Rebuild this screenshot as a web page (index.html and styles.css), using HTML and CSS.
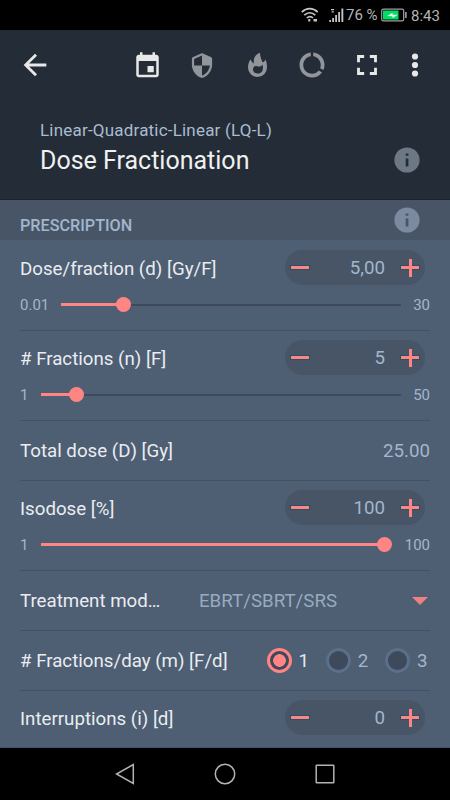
FILE: index.html
```html
<!DOCTYPE html>
<html lang="en">
<head>
<meta charset="utf-8">
<title>Dose Fractionation</title>
<link rel="stylesheet" href="styles.css">
</head>
<body>
<div class="status">
  <svg class="wifi" width="18" height="16" viewBox="0 0 18 16" fill="none" stroke="#c4c4c4" stroke-width="1.7"><path d="M.8 5.2C5.5.5 12 .5 16.700 5.200M3.300 8.200c3.300-3.200 7.700-3.200 11 0M5.800 11c2-1.900 4.400-1.900 6.200 0"/><path d="M7.300 13.200h2M12.500 13.200h3.500" stroke-width="2.400"/></svg>
  <svg class="signal" width="15" height="16" viewBox="0 0 15 16" fill="#c4c4c4"><path d="M.3 13h1.700v2H.300zM3.200 11H5v4H3.200zM6.200 8H8v7H6.200zM9.200 5H11v10H9.200zM12.400 1.500h1.900V15h-1.900zM2 2h3v1.300H2zM2.600 4.200h2.200v1.300H2.600z"/></svg>
  <span class="pct">76 %</span>
  <svg class="battery" width="26" height="14" viewBox="0 0 26 14"><rect x=".7" y="1.200" width="22" height="11.600" rx="1.600" fill="none" stroke="#a99eaa" stroke-width="1.200"/><rect x="2" y="2.500" width="15.500" height="9" fill="#00df64"/><path d="M6 8l5.500-3v1.800H17L11.500 10V8.300z" fill="#e9fff1"/><path d="M24.200 4h1.400v6h-1.400z" fill="#b5b5b5"/></svg>
  <span class="clock">8:43</span>
</div>
<header class="header">
  <div class="toolbar">
    <svg class="back" width="34" height="34" viewBox="0 0 24 24"><path d="M20 11H7.830l5.590-5.590L12 4l-8 8 8 8 1.410-1.410L7.830 13H20v-2z"/></svg>
    <div class="tool"><svg class="low" width="31" height="30" viewBox="0 0 24 24"><path d="M17 12h-5v5h5v-5zM16 1v2H8V1H6v2H5c-1.110 0-1.990.9-1.990 2L3 19c0 1.100.890 2 2 2h14c1.100 0 2-.9 2-2V5c0-1.100-.9-2-2-2h-1V1h-2zm3 18H5V8h14v11z"/></svg></div>
    <div class="tool dim"><svg width="28" height="27" viewBox="0 0 24 24"><path d="M11.190 1.360l-7 3.110C3.470 4.790 3 5.510 3 6.300V11c0 5.550 3.840 10.740 9 12 5.160-1.260 9-6.450 9-12V6.300c0-.79-.47-1.510-1.190-1.830l-7-3.110c-.51-.23-1.110-.23-1.620 0zM12 11.990h7c-.53 4.120-3.280 7.790-7 8.940V12H5V6.300l7-3.110v8.800z"/></svg></div>
    <div class="tool dim"><svg width="25" height="28" viewBox="0 0 25 28"><path fill-rule="evenodd" d="M15 1.800C10 3.500 8 8 9 12.500C7.300 11.500 6 10 5.600 8.200C4 10.500 3 13 3 16.500a9.500 9.500 0 0 0 19 0C22 13 21.500 11 20.700 8.500C20 10 19 11 17.500 11.200C16 8 15 5 15 1.800zM17.600 13.500C18.800 20 16.500 22.500 12.500 22.500C9.500 22.500 8 20.500 8 18.500C8 15.800 10 14.800 12 15.200C14 16 16.500 15.500 17.600 13.500z"/></svg></div>
    <div class="tool dim"><svg width="30" height="30" viewBox="0 0 24 24"><path d="M13 2.050v3.030c3.390.49 6 3.390 6 6.920 0 .9-.18 1.750-.48 2.540l2.600 1.530c.56-1.240.88-2.620.88-4.070 0-5.180-3.950-9.450-9-9.950zM12 19c-3.870 0-7-3.130-7-7 0-3.530 2.610-6.430 6-6.920V2.050c-5.060.5-9 4.760-9 9.950 0 5.520 4.470 10 9.990 10 3.310 0 6.240-1.610 8.060-4.090l-2.600-1.530C16.170 17.980 14.210 19 12 19z"/></svg></div>
    <div class="tool"><svg width="34" height="34" viewBox="0 0 24 24"><path d="M7 14H5v5h5v-2H7v-3zm-2-4h2V7h3V5H5v5zm12 7h-3v2h5v-5h-2v3zM14 5v2h3v3h2V5h-5z"/></svg></div>
    <div class="tool more"><svg width="8" height="26" viewBox="0 0 8 26"><circle cx="4" cy="4.500" r="3.100"/><circle cx="4" cy="13" r="3.100"/><circle cx="4" cy="21.500" r="3.100"/></svg></div>
  </div>
  <div class="heading">
    <div>
      <div class="subtitle">Linear-Quadratic-Linear (LQ-L)</div>
      <h1 class="title">Dose Fractionation</h1>
    </div>
    <svg class="info" width="26" height="26" viewBox="0 0 26 26"><circle cx="13" cy="13" r="12.600" fill="#6c7985"/><path d="M11.700 6.500h2.700v2.300h-2.700zM11.700 11.500h2.700v8h-2.700z" fill="#242c37"/></svg>
  </div>
</header>
<div class="section">
  <h2 class="section-name">PRESCRIPTION</h2>
  <svg class="info" width="26" height="26" viewBox="0 0 26 26"><circle cx="13" cy="13" r="12.600" fill="#7b8a9e"/><path d="M11.700 6.500h2.700v2.300h-2.700zM11.700 11.500h2.700v8h-2.700z" fill="#475567"/></svg>
</div>
<main class="list">
  <div class="row tall">
    <div class="line"><span class="label">Dose/fraction (d) [Gy/F]</span><div class="stepper"><i class="minus"></i><span class="num">5,00</span><i class="plus"></i></div></div>
    <div class="range"><span class="min wide">0.01</span><div class="track"><div class="fill" style="width:62px"></div><i class="knob"></i></div><span class="max">30</span></div>
  </div>
  <div class="row tall">
    <div class="line"><span class="label"># Fractions (n) [F]</span><div class="stepper"><i class="minus"></i><span class="num">5</span><i class="plus"></i></div></div>
    <div class="range"><span class="min">1</span><div class="track"><div class="fill" style="width:35.5px"></div><i class="knob"></i></div><span class="max">50</span></div>
  </div>
  <div class="row short"><span class="label">Total dose (D) [Gy]</span><span class="value">25.00</span></div>
  <div class="row tall">
    <div class="line"><span class="label">Isodose [%]</span><div class="stepper"><i class="minus"></i><span class="num">100</span><i class="plus"></i></div></div>
    <div class="range"><span class="min">1</span><div class="track"><div class="fill" style="width:344px"></div><i class="knob"></i></div><span class="max wide">100</span></div>
  </div>
  <div class="row short"><span class="label mod">Treatment mod…</span><span class="select">EBRT/SBRT/SRS</span><i class="caret"></i></div>
  <div class="row short">
    <span class="label day"># Fractions/day (m) [F/d]</span>
    <span class="option on"><i class="radio"></i>1</span>
    <span class="option"><i class="radio"></i>2</span>
    <span class="option"><i class="radio"></i>3</span>
  </div>
  <div class="row last">
    <div class="line"><span class="label">Interruptions (i) [d]</span><div class="stepper"><i class="minus"></i><span class="num">0</span><i class="plus"></i></div></div>
  </div>
</main>
<nav class="nav">
  <svg width="20" height="22" viewBox="0 0 20 22"><path d="M18.300 1.500v19L1.500 11z"/></svg>
  <svg width="22" height="22" viewBox="0 0 22 22"><circle cx="11" cy="11" r="9.700"/></svg>
  <svg width="20" height="20" viewBox="0 0 20 20"><rect x="1.200" y="1.200" width="17.600" height="17.600" rx=".5"/></svg>
</nav>
</body>
</html>
```

FILE: styles.css
```css
* { box-sizing: border-box; }
body {
  margin: 0;
  width: 450px;
  height: 800px;
  overflow: hidden;
  display: flex;
  flex-direction: column;
  background: #000;
  color: #e9edf1;
  font-family: Roboto, "Liberation Sans", sans-serif;
}
svg { display: block; flex: none; }
h1, h2 { margin: 0; font-weight: 400; }

.status {
  height: 30px;
  flex: none;
  display: flex;
  align-items: center;
  padding-left: 301px;
  color: #b5b5b5;
  line-height: 30px;
  white-space: nowrap;
}
.signal { margin-left: 10px; }
.pct { width: 34px; margin-left: 2px; font-size: 15px; }
.battery { margin-left: 1px; }
.clock { margin-left: 4px; margin-top: 2px; font-size: 15px; }

.header { height: 170px; flex: none; background: #242c37; border-bottom: 1px solid #1d242d; }
.toolbar { height: 70px; display: flex; align-items: center; fill: #e8e8e8; }
.back { margin-left: 17.500px; margin-right: 68px; }
.tool { width: 55px; display: flex; justify-content: center; }
.dim { fill: #92969b; }
.low { margin-top: 2px; }
.more { width: 41px; }
.heading { display: flex; justify-content: space-between; padding: 20px 30px 0 40px; }
.subtitle { font-size: 17px; line-height: 20px; color: #a9bdd0; letter-spacing: .2px; }
.title { margin-top: 1px; font-size: 25px; line-height: 40px; color: #f0f0f0; }
.heading .info { margin-top: 27px; }

.section {
  height: 40px;
  flex: none;
  display: flex;
  justify-content: space-between;
  padding: 7px 30px 0 20px;
  background: #475567;
}
.section-name { font-size: 16.2px; line-height: 37px; font-weight: 500; color: #a3b6cc; }

.list { height: 508px; flex: none; padding: 1px 20px 0; background: #4e5e73; border-bottom: 1px solid #43526a; overflow: hidden; }
.row { border-bottom: 1px solid #435164; }
.tall { height: 90px; padding-top: 9px; }
.short { height: 60px; display: flex; align-items: center; }
.last { height: 60px; padding-top: 9px; border: 0; }
.line { display: flex; justify-content: space-between; align-items: center; padding-right: 5px; }
.label { font-size: 18.7px; white-space: nowrap; }
.line .label { padding-top: 2px; }
.stepper {
  width: 140px;
  height: 35px;
  border-radius: 18px;
  background: #475567;
  display: flex;
  align-items: center;
  padding: 0 6px;
}
.num { width: 76px; margin-right: 16px; text-align: right; font-size: 18.7px; color: #a3b6cc; }
.minus, .plus { width: 18px; height: 3px; background: #ff8585; box-shadow: 0 0 0 1px #174c6299; flex: none; }
.plus { position: relative; }
.plus::after { content: ""; position: absolute; left: 7.500px; top: -7.500px; width: 3px; height: 18px; background: #ff8585; }

.range { height: 20px; margin-top: 9.500px; display: flex; align-items: center; font-size: 15px; color: #a3b6cc; }
.min { width: 21px; }
.min.wide { width: 41px; }
.max { width: 29px; text-align: right; }
.max.wide { width: 38px; }
.track { flex: 1; height: 2px; background: #3e4a5b; display: flex; align-items: center; }
.fill { height: 3px; flex: none; background: #ff8585; }
.knob { width: 15px; height: 15px; margin-left: -7.500px; border-radius: 50%; background: #ff8585; flex: none; }

.value { margin-left: auto; font-size: 18.7px; color: #a3b6cc; }
.mod { width: 179px; }
.select { font-size: 18.7px; color: #98abbf; }
.caret { margin-left: auto; margin-right: 2px; border: 8px solid transparent; border-top: 8px solid #ee8083; border-bottom: 0; }
.day { width: 246.500px; flex: none; }
.option { width: 59.300px; flex: none; display: flex; align-items: center; font-size: 18.7px; color: #a3b6cc; }
.radio { width: 25px; height: 25px; flex: none; margin-right: 7px; border: 3px solid #5b6f8a; border-radius: 50%; background: #3e4a5b; }
.on { color: #e0e8f0; }
.on .radio { border-color: #ff8585; background: radial-gradient(circle, #ff8585 6px, #3e4a5b 6.600px); }

.nav { flex: 1; display: flex; justify-content: center; align-items: center; gap: 79px; fill: none; stroke: #b3b3b3; stroke-width: 1.500; }
```
